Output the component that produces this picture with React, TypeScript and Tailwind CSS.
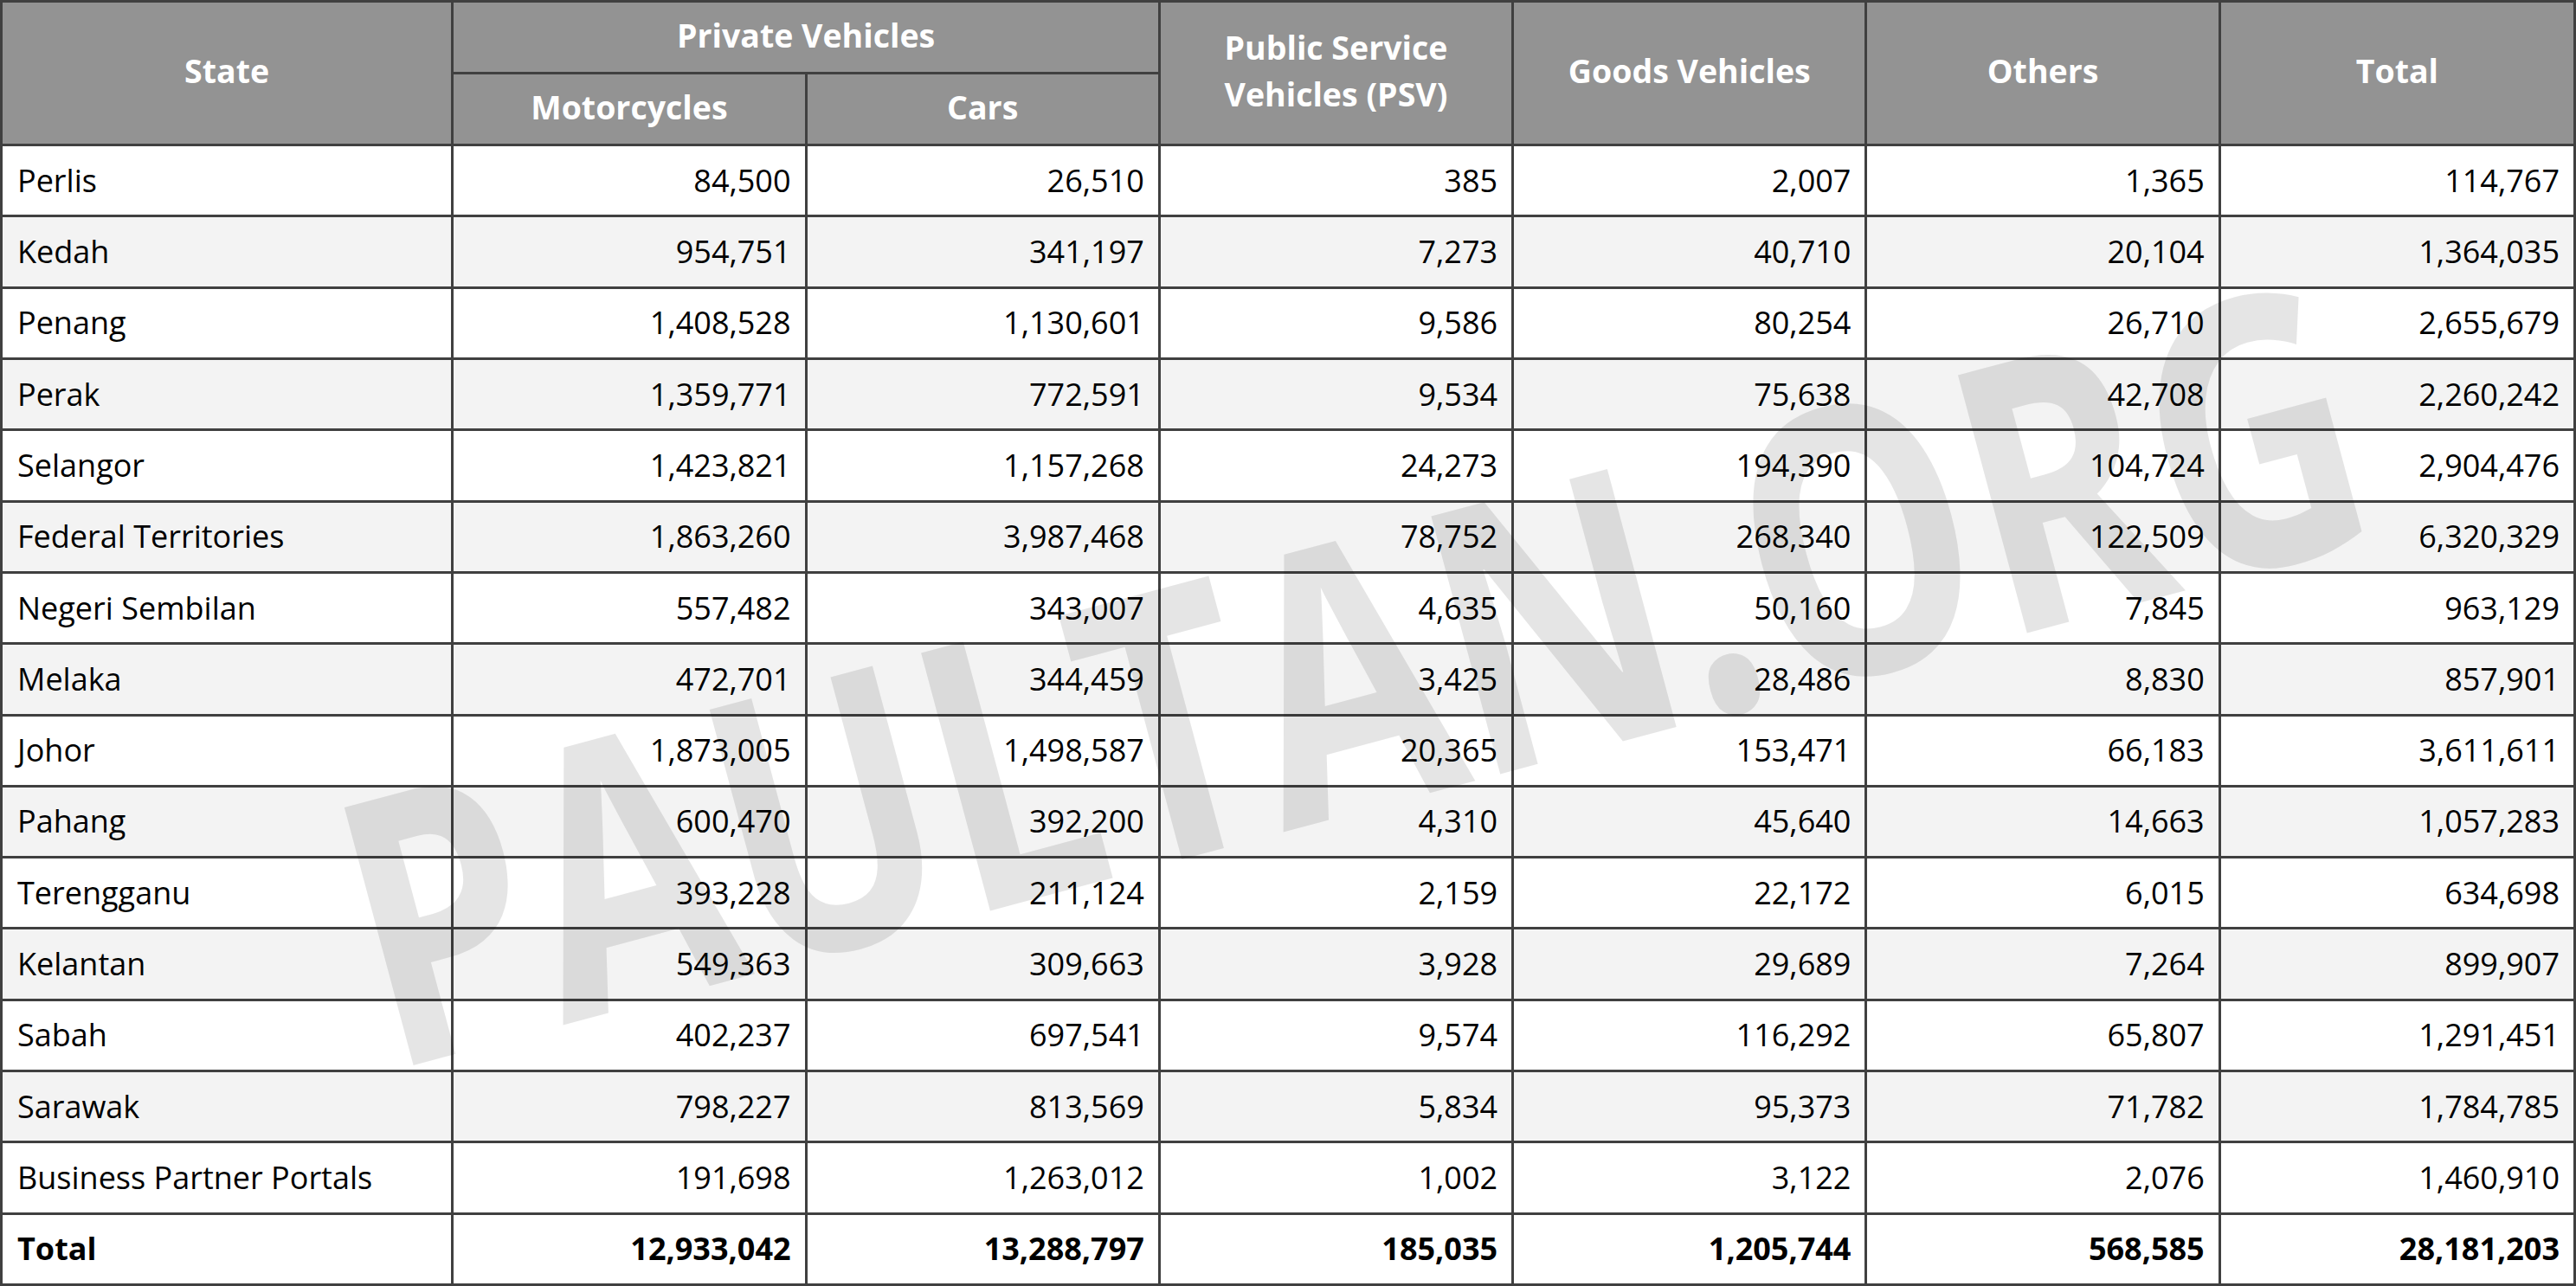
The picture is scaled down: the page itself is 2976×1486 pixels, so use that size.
import React from "react";

const rows: string[][] = [
  ["Perlis", "84,500", "26,510", "385", "2,007", "1,365", "114,767"],
  ["Kedah", "954,751", "341,197", "7,273", "40,710", "20,104", "1,364,035"],
  ["Penang", "1,408,528", "1,130,601", "9,586", "80,254", "26,710", "2,655,679"],
  ["Perak", "1,359,771", "772,591", "9,534", "75,638", "42,708", "2,260,242"],
  ["Selangor", "1,423,821", "1,157,268", "24,273", "194,390", "104,724", "2,904,476"],
  ["Federal Territories", "1,863,260", "3,987,468", "78,752", "268,340", "122,509", "6,320,329"],
  ["Negeri Sembilan", "557,482", "343,007", "4,635", "50,160", "7,845", "963,129"],
  ["Melaka", "472,701", "344,459", "3,425", "28,486", "8,830", "857,901"],
  ["Johor", "1,873,005", "1,498,587", "20,365", "153,471", "66,183", "3,611,611"],
  ["Pahang", "600,470", "392,200", "4,310", "45,640", "14,663", "1,057,283"],
  ["Terengganu", "393,228", "211,124", "2,159", "22,172", "6,015", "634,698"],
  ["Kelantan", "549,363", "309,663", "3,928", "29,689", "7,264", "899,907"],
  ["Sabah", "402,237", "697,541", "9,574", "116,292", "65,807", "1,291,451"],
  ["Sarawak", "798,227", "813,569", "5,834", "95,373", "71,782", "1,784,785"],
  ["Business Partner Portals", "191,698", "1,263,012", "1,002", "3,122", "2,076", "1,460,910"],
];

const totals = ["Total", "12,933,042", "13,288,797", "185,035", "1,205,744", "568,585", "28,181,203"];

function Head({ children, className = "" }: { children: React.ReactNode; className?: string }) {
  return (
    <div
      className={
        "flex items-center justify-center bg-[#939393] px-2 pb-[5px] text-center text-[37.5px] font-bold leading-[54px] text-white " +
        className
      }
    >
      <div>{children}</div>
    </div>
  );
}

export default function App() {
  return (
    <div className="relative h-[1486px] w-[2976px] overflow-hidden bg-white font-['Open_Sans',sans-serif] text-black">
      <div className="grid h-full w-full grid-cols-[523fr_409fr_409fr_409fr_409fr_409fr_411fr] grid-rows-[80px_80px_repeat(16,minmax(0,1fr))] gap-[3px] bg-[#404040] p-[3px]">
        <Head className="row-span-2">State</Head>
        <Head className="col-span-2">Private Vehicles</Head>
        <Head className="row-span-2">
          Public Service
          <br />
          Vehicles (PSV)
        </Head>
        <Head className="row-span-2">Goods Vehicles</Head>
        <Head className="row-span-2">Others</Head>
        <Head className="row-span-2">Total</Head>
        <Head>Motorcycles</Head>
        <Head>Cars</Head>

        {rows.map((r, i) =>
          r.map((c, j) => (
            <div
              key={i + "-" + j}
              className={
                "flex items-center text-[36px] leading-none " +
                (i % 2 === 1 ? "bg-[#f3f3f3] " : "bg-white ") +
                (j === 0 ? "justify-start pl-[17px]" : "justify-end pr-[16px]")
              }
            >
              {c}
            </div>
          ))
        )}
        {totals.map((c, j) => (
          <div
            key={"t-" + j}
            className={
              "flex items-center bg-white text-[36px] font-bold leading-none " +
              (j === 0 ? "justify-start pl-[17px]" : "justify-end pr-[16px]")
            }
          >
            {c}
          </div>
        ))}
      </div>

      <div className="pointer-events-none absolute left-[1560px] top-[768px] -translate-x-1/2 -translate-y-1/2 rotate-[-15deg] scale-x-[0.77] whitespace-nowrap text-[432px] font-bold leading-none text-black/10">
        PAULTAN.ORG
      </div>
    </div>
  );
}
